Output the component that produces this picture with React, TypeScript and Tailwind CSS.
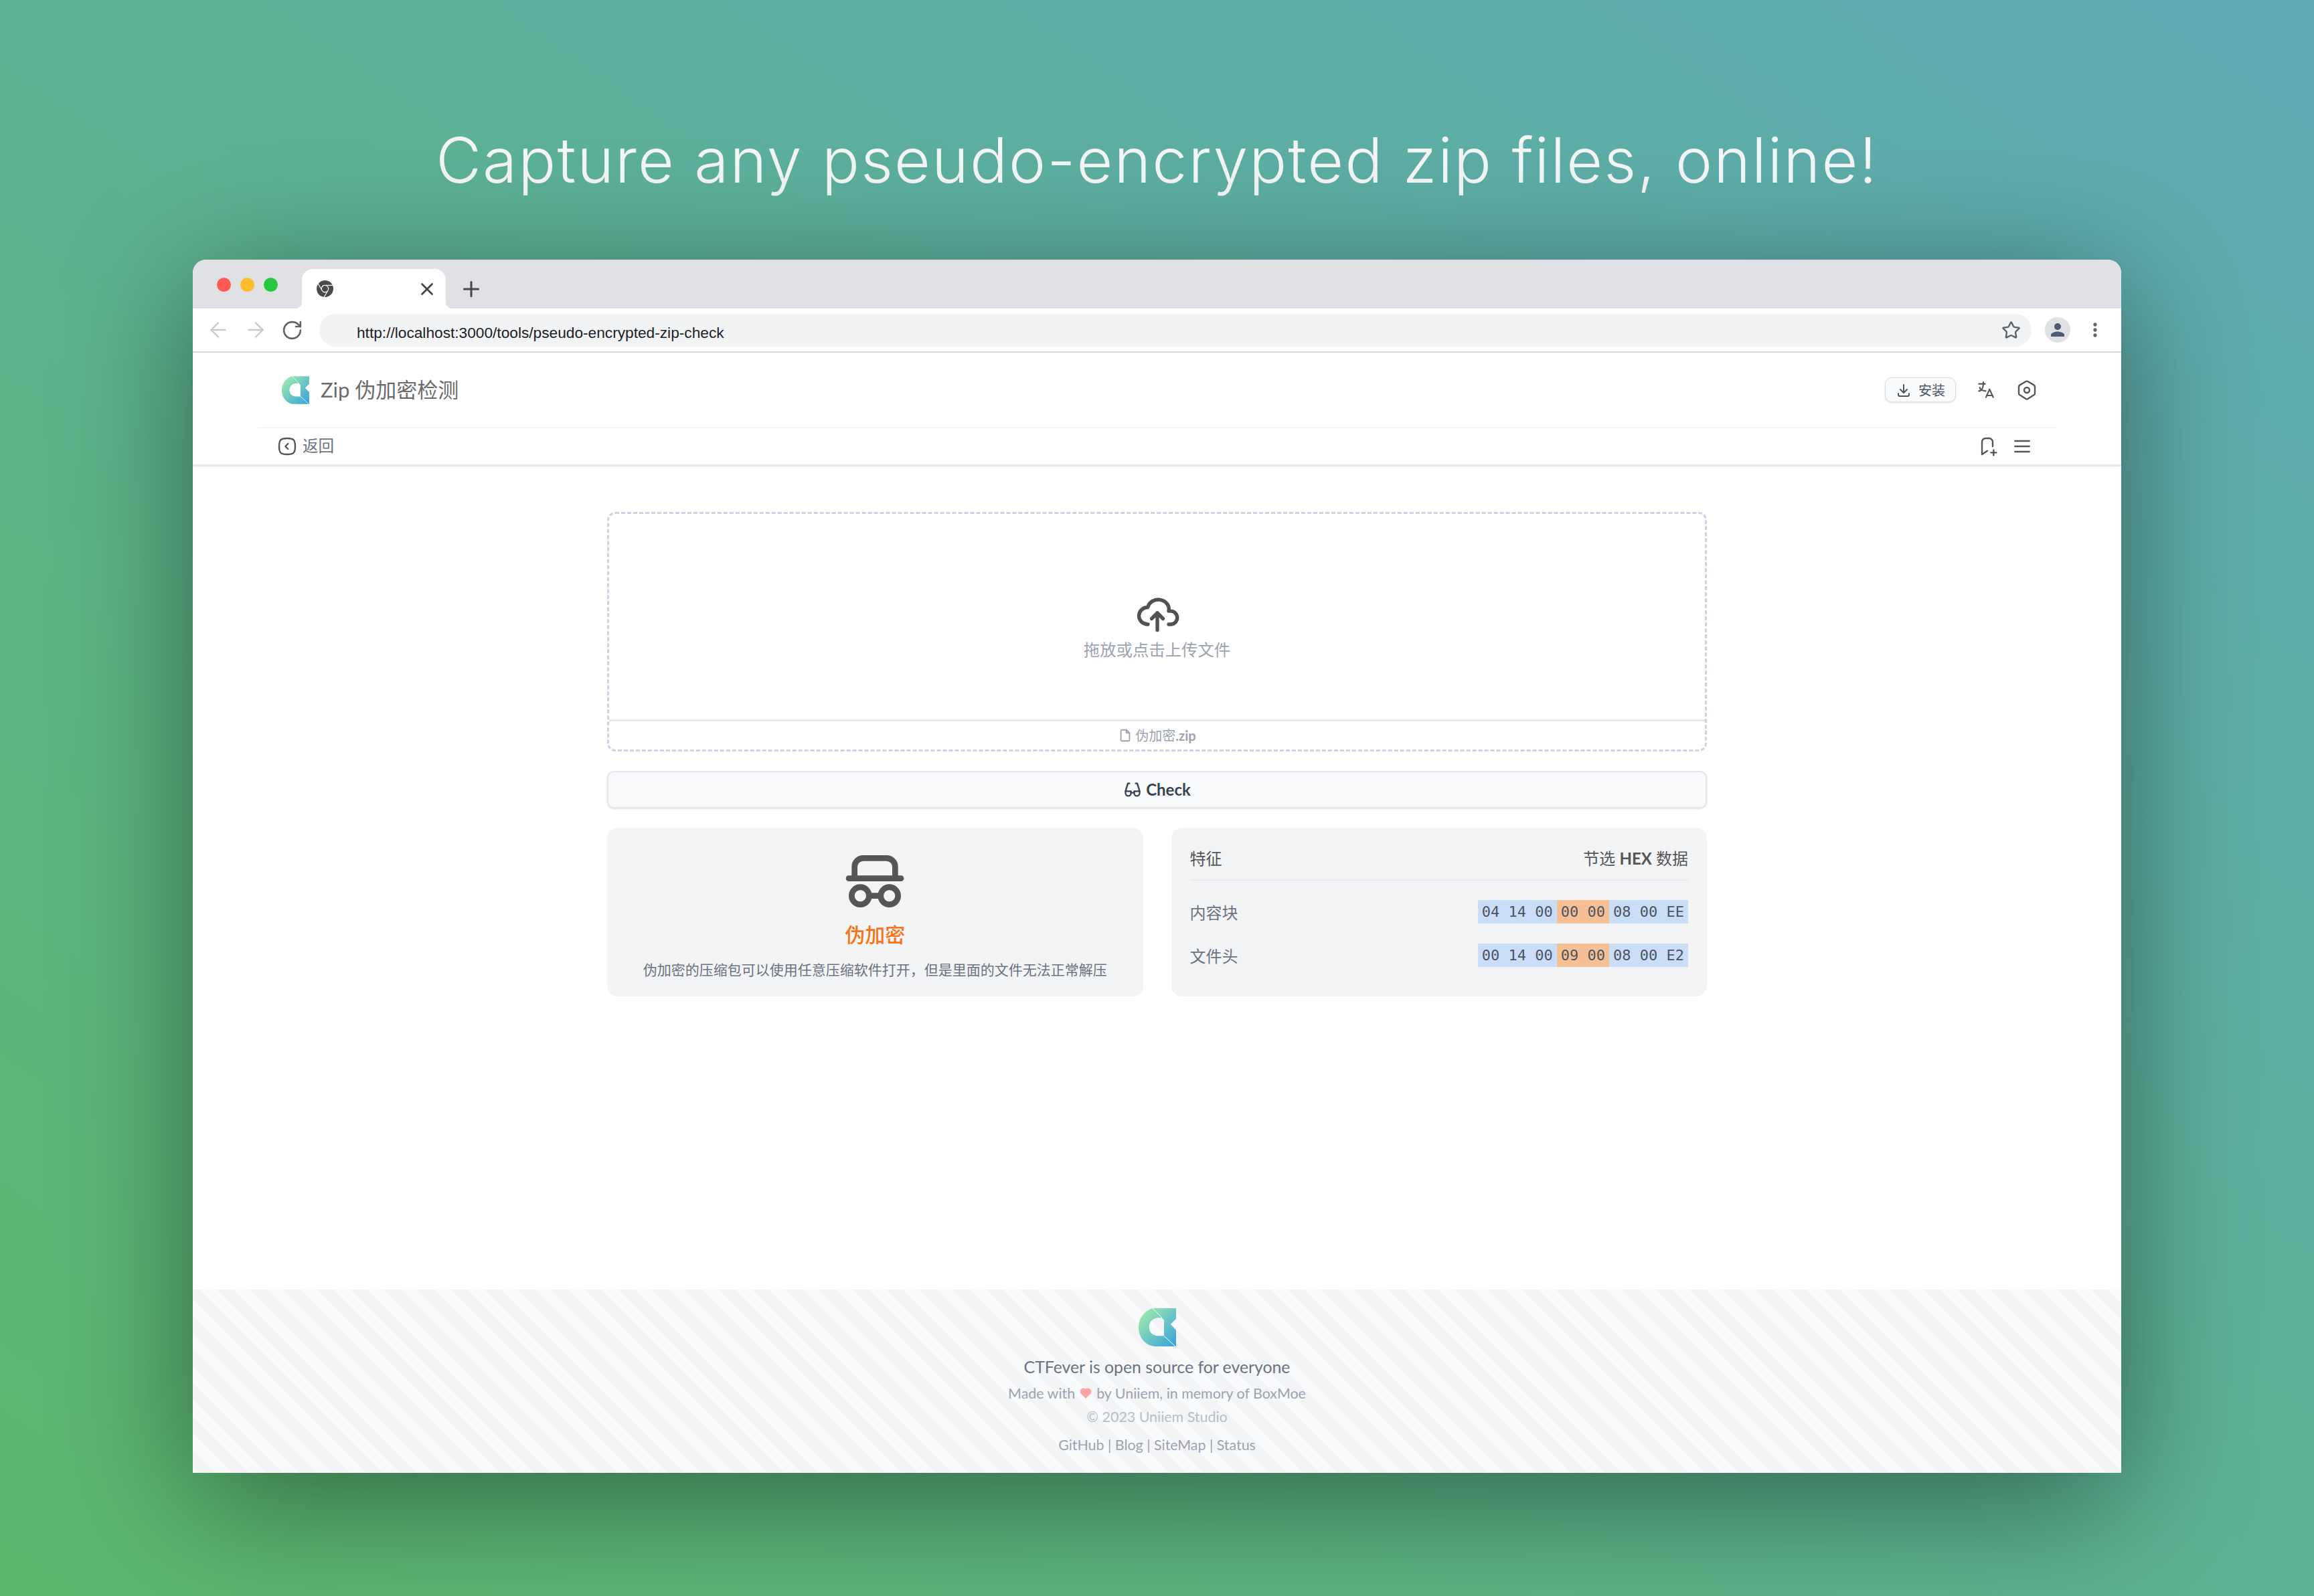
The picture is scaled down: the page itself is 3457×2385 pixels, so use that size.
import React from 'react';
import { ArrowLeft, ArrowRight, Plus, RotateCw, Star, X } from 'lucide-react';
import { MdMoreVert, MdPerson } from 'react-icons/md';
import { SiGooglechrome } from 'react-icons/si';
import {
  TbBookmarkPlus,
  TbCloudUpload,
  TbDownload,
  TbEyeglass,
  TbFile,
  TbHeartFilled,
  TbLanguage,
  TbMenu2,
  TbSettings2,
  TbSpy,
  TbSquareRoundedChevronLeft,
} from 'react-icons/tb';

function Logo({ id, className }: { id: string; className: string }) {
  return (
    <svg viewBox="0 0 168 171" className={className}>
      <defs>
        <linearGradient id={id} x1="0.05" y1="0.05" x2="1" y2="1">
          <stop offset="0" stopColor="#a3ecaa" />
          <stop offset="1" stopColor="#35a2de" />
        </linearGradient>
      </defs>
      <path
        fillRule="evenodd"
        fill={`url(#${id})`}
        d="M62 0L168 0L168 47L143 72L168 98L168 171L78 171C30 171 0 130 0 85C0 45 25 12 62 0ZM90 43C65 43 47 60 47 84C47 108 65 124 88 124L114 124L114 54L104 43Z"
      />
      <path d="M62 0L105 43M114 124L165 171" stroke="#fff" strokeWidth="3" fill="none" />
    </svg>
  );
}

function HexRow({ label, head, mid, tail }: { label: string; head: string; mid: string; tail: string }) {
  return (
    <div className="flex h-[35px] items-center justify-between">
      <span className="mt-[3px] text-[24px] leading-[34px] text-[#6b7280]">{label}</span>
      <div className="flex h-[35px] items-center font-['DejaVu_Sans_Mono',monospace] text-[22px] text-[#4b5563] whitespace-pre">
        <span className="flex h-full items-center bg-[#cbdef7] px-[6px]">{head}</span>
        <span className="flex h-full items-center bg-[#f6c094] px-[6px]">{mid}</span>
        <span className="flex h-full items-center bg-[#cbdef7] px-[6px]">{tail}</span>
      </div>
    </div>
  );
}

export default function App() {
  return (
    <div className="flex h-[2385px] w-full flex-col items-center overflow-hidden bg-linear-to-tr from-[#5cb86c] to-[#5fabb6] font-[Lato,'Noto_Sans_CJK_SC',sans-serif]">
      <div className="h-[388px] pt-[171px] text-center">
        <h1 className="font-['Inter',sans-serif] text-[93px] leading-[136px] font-light tracking-[2.1px] text-[#f5f6f6] whitespace-nowrap">
          Capture any pseudo-encrypted zip files, online!
        </h1>
      </div>

      <div className="flex h-[1813px] w-[2881px] flex-col rounded-t-[20px] bg-white shadow-[0_40px_200px_rgba(0,0,0,0.45)]">
        {/* browser tab strip */}
        <div className="flex h-[73px] shrink-0 items-end rounded-t-[20px] bg-[#dfe1e5] pl-[36px]">
          <div className="mb-[25px] flex gap-[14px] self-end">
            <span className="h-[21px] w-[21px] rounded-full bg-[#fb5a55]" />
            <span className="h-[21px] w-[21px] rounded-full bg-[#fdbb2e]" />
            <span className="h-[21px] w-[21px] rounded-full bg-[#27c83f]" />
          </div>
          <div className="relative ml-[36px] flex h-[59px] w-[215px] items-center justify-between rounded-t-[16px] bg-white pr-[13px] pl-[22px]">
            <span className="absolute bottom-0 -left-[10px] h-[10px] w-[10px] bg-[radial-gradient(circle_at_0_0,transparent_10px,#fff_10.5px)]" />
            <span className="absolute -right-[10px] bottom-0 h-[10px] w-[10px] bg-[radial-gradient(circle_at_100%_0,transparent_10px,#fff_10.5px)]" />
            <SiGooglechrome size={25} color="#4a4a4c" />
            <X size={30} strokeWidth={2.2} color="#45474a" />
          </div>
          <div className="ml-[20px] flex h-[59px] items-center">
            <Plus size={36} strokeWidth={2} color="#45474a" />
          </div>
        </div>

        {/* browser toolbar */}
        <div className="flex h-[66px] shrink-0 items-center border-b-2 border-[#dadce0] pr-[23px] pl-[20px]">
          <div className="flex items-center gap-[20px]">
            <ArrowLeft size={36} color="#c5c8cc" strokeWidth={1.6} />
            <ArrowRight size={36} color="#c5c8cc" strokeWidth={1.6} />
            <RotateCw size={33} color="#606368" strokeWidth={1.9} />
          </div>
          <div className="ml-[24px] flex h-[49px] flex-1 items-center justify-between rounded-full bg-[#f1f3f4] pr-[16px] pl-[56px]">
            <span className="pt-[8px] font-['Liberation_Sans',sans-serif] text-[22.7px] text-[#202124]">
              http://localhost:3000/tools/pseudo-encrypted-zip-check
            </span>
            <Star size={29} color="#5f6368" strokeWidth={2} />
          </div>
          <div className="ml-[20px] flex h-[38px] w-[38px] items-center justify-center rounded-full bg-[#dfe1e5]">
            <MdPerson size={30} color="#4f5b73" />
          </div>
          <MdMoreVert size={32} color="#5f6368" className="ml-[21px]" />
        </div>

        {/* app header */}
        <header className="shrink-0 border-b-2 border-[#e5e7eb] shadow-sm">
          <div className="px-[97px]">
            <div className="flex h-[113px] items-center justify-between border-b-2 border-[#f3f4f6] pr-[28px] pl-[36px]">
              <div className="flex items-center gap-[17px]">
                <Logo id="logo-top" className="h-[42px] w-[41px]" />
                <span className="text-[31px] text-[#6b6b6b]">Zip 伪加密检测</span>
              </div>
              <div className="flex items-center gap-[29px] text-[#555]">
                <button className="flex h-[37px] w-[106px] items-center justify-center gap-[10px] rounded-[10px] border border-[#d8dce2] bg-[#f9fafb] text-[20px] text-[#4b5563] shadow-sm">
                  <TbDownload size={24} />
                  安装
                </button>
                <TbLanguage size={32} strokeWidth={1.6} />
                <TbSettings2 size={32} strokeWidth={1.8} />
              </div>
            </div>
            <div className="flex h-[54px] items-center justify-between pr-[35px] pl-[28px]">
              <div className="flex items-center gap-[7px] text-[#6b7280]">
                <TbSquareRoundedChevronLeft size={32} strokeWidth={1.8} color="#555" />
                <span className="text-[23.5px]">返回</span>
              </div>
              <div className="flex items-center gap-[20px] text-[#555]">
                <TbBookmarkPlus size={32} strokeWidth={1.8} />
                <TbMenu2 size={32} strokeWidth={1.8} />
              </div>
            </div>
          </div>
        </header>

        {/* page body */}
        <main className="flex-1 px-[619px] pt-[69px]">
          <div className="flex h-[358px] flex-col rounded-[12px] border-[3px] border-dashed border-[#cbd5e1]">
            <div className="flex flex-1 flex-col items-center justify-center pt-[26px]">
              <TbCloudUpload size={68} strokeWidth={1.9} color="#525252" className="mb-[4px]" />
              <span className="text-[24.4px] leading-[34px] text-[#9ca3af]">拖放或点击上传文件</span>
            </div>
            <div className="flex h-[45px] items-center justify-center gap-[4px] border-t-[3px] border-[#e5e7eb] text-[20px] text-[#9ca3af]">
              <TbFile size={22} />
              <span>
                伪加密<b className="font-bold">.zip</b>
              </span>
            </div>
          </div>

          <button className="mt-[29px] flex h-[56px] w-full items-center justify-center gap-[6px] rounded-[10px] border-2 border-[#e5e7eb] bg-[#f9fafb] text-[24px] font-bold text-[#374151] shadow-sm">
            <TbEyeglass size={28} />
            Check
          </button>

          <div className="mt-[29px] grid h-[252px] grid-cols-2 gap-[42px]">
            <div className="flex flex-col items-center rounded-[16px] bg-[#f3f4f6] pt-[28px]">
              <TbSpy size={104} strokeWidth={2} color="#555" />
              <div className="mt-[7px] text-[30px] leading-[40px] font-medium text-[#f97316]">伪加密</div>
              <div className="mt-[19px] text-[21px] leading-[28px] text-[#6b7280]">
                伪加密的压缩包可以使用任意压缩软件打开，但是里面的文件无法正常解压
              </div>
            </div>
            <div className="rounded-[16px] bg-[#f3f4f6] px-[28px] pt-[29px]">
              <div className="flex items-center justify-between border-b-2 border-[#e9eaed] pb-[14px] text-[24px] leading-[34px] text-[#555]">
                <span>特征</span>
                <span>
                  节选 <b className="font-bold">HEX</b> 数据
                </span>
              </div>
              <div className="mt-[29px] flex flex-col gap-[30px]">
                <HexRow label="内容块" head="04 14 00" mid="00 00" tail="08 00 EE" />
                <HexRow label="文件头" head="00 14 00" mid="09 00" tail="08 00 E2" />
              </div>
            </div>
          </div>
        </main>

        {/* footer */}
        <footer className="flex h-[274px] shrink-0 flex-col items-center bg-[repeating-linear-gradient(45deg,#f9fafb,#f9fafb_6.36px,#f3f4f6_6.36px,#f3f4f6_24.04px,#f9fafb_24.04px,#f9fafb_35.36px)] pt-[28px]">
          <Logo id="logo-footer" className="h-[57px] w-[56px]" />
          <div className="mt-[15px] text-[24.8px] leading-[32px] text-[#6b7280]">CTFever is open source for everyone</div>
          <div className="mt-[9px] flex items-center gap-[6px] text-[21.4px] leading-[28px] text-[#9ca3af]">
            Made with <TbHeartFilled size={20} color="#fca5a5" /> by Uniiem, in memory of BoxMoe
          </div>
          <div className="mt-[7px] text-[21.4px] leading-[28px] text-[#b8bdc6]">© 2023 Uniiem Studio</div>
          <div className="mt-[14px] text-[21.4px] leading-[28px] text-[#9ca3af]">GitHub | Blog | SiteMap | Status</div>
        </footer>
      </div>
    </div>
  );
}
